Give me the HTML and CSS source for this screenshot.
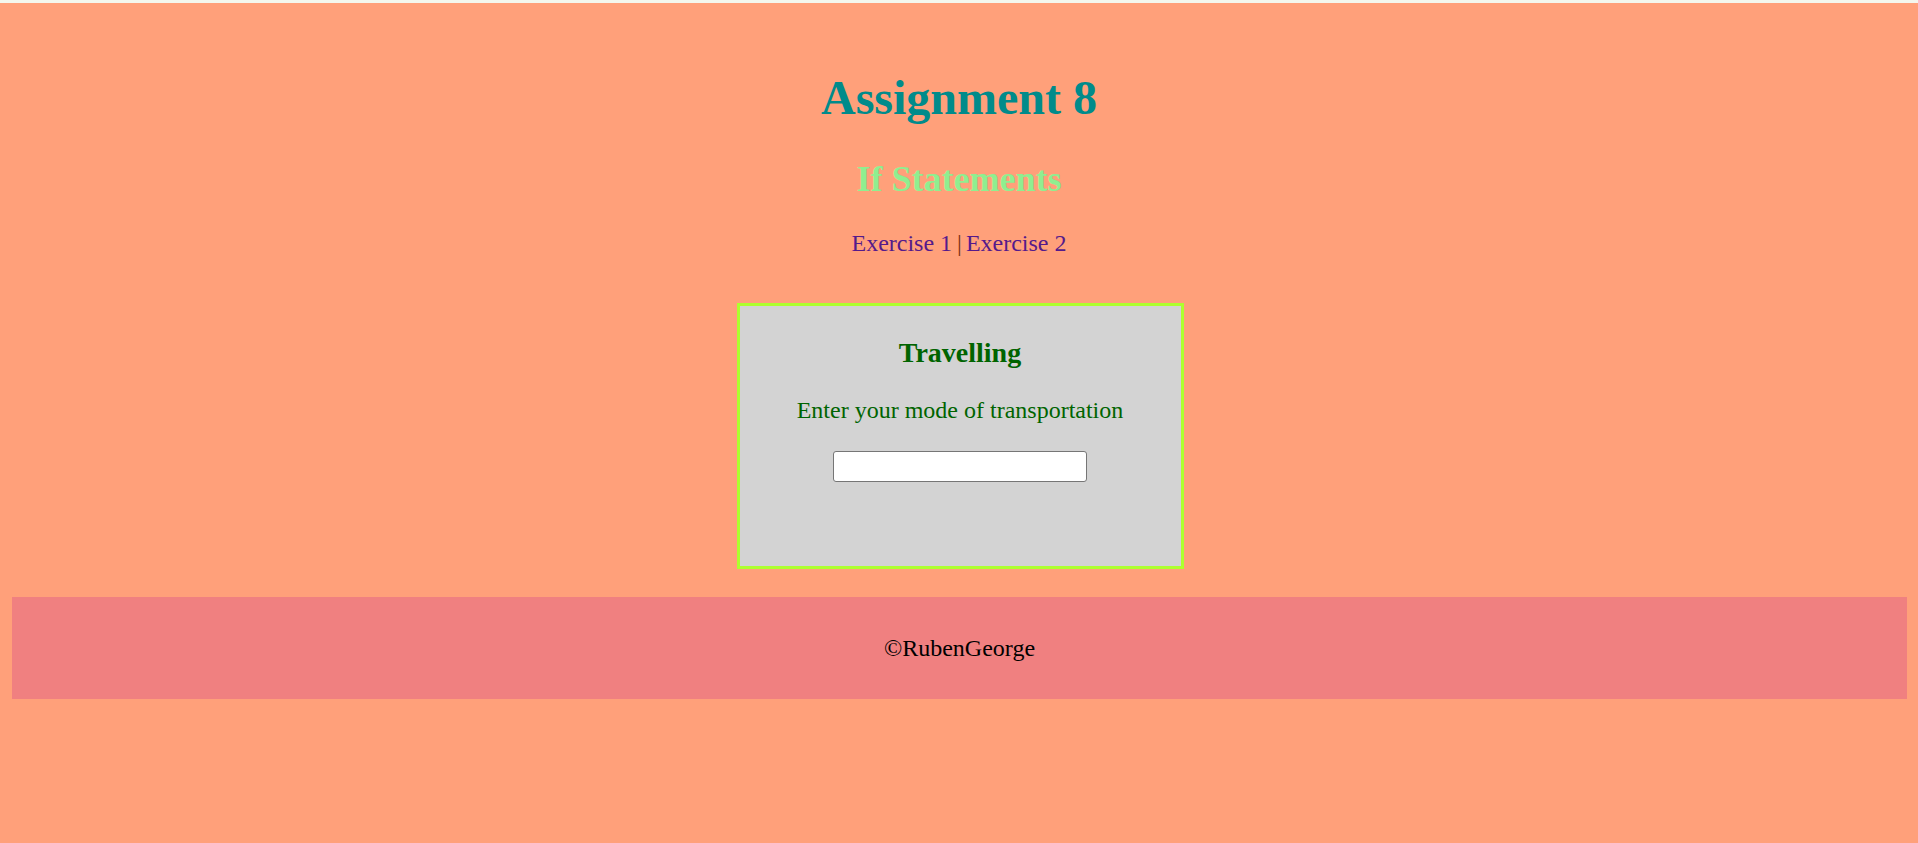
FILE: index.html
```html
<!DOCTYPE html>
<html lang="en">
<head>
<meta charset="utf-8">
<title>Assignment 8</title>
<link rel="stylesheet" href="styles.css">
</head>
<body>
<div class="topbar"></div>
<header class="header">
  <h1 class="title">Assignment 8</h1>
  <h2 class="subtitle">If Statements</h2>
  <nav class="nav"><a class="nav-link" href="#">Exercise 1</a><span class="nav-sep">|</span><a class="nav-link" href="#">Exercise 2</a></nav>
</header>
<main class="main">
  <section class="card">
    <h3 class="card-title">Travelling</h3>
    <p class="card-text">Enter your mode of transportation</p>
    <input class="card-input" type="text">
  </section>
</main>
<footer class="footer">
  <p class="footer-text">&copy;RubenGeorge</p>
</footer>
</body>
</html>
```

FILE: styles.css
```css
html, body {
  margin: 0;
  padding: 0;
}

body {
  background: #ffa07a;
  font-family: "Liberation Serif", "Times New Roman", serif;
  font-size: 24px;
  color: #000;
  min-height: 843px;
}

.topbar {
  height: 3px;
  background: #f4f7ee;
}

.header {
  display: flex;
  flex-direction: column;
  align-items: center;
  padding-top: 67px;
}

.title {
  margin: 0;
  font-size: 48px;
  line-height: 55px;
  font-weight: bold;
  color: #008b8b;
}

.subtitle {
  margin: 34px 0 0;
  font-size: 36px;
  line-height: 41px;
  font-weight: bold;
  color: #90ee90;
}

.nav {
  margin-top: 29px;
  font-size: 24px;
  line-height: 28px;
  color: #000;
}

.nav-link {
  color: #551a8b;
  text-decoration: none;
}

.nav-sep {
  margin: 0 4px 0 5px;
  color: #7a2e12;
}

.main {
  display: flex;
  justify-content: center;
  margin-top: 46px;
  padding-left: 2px;
}

.card {
  box-sizing: border-box;
  width: 447px;
  height: 266px;
  border: 3px solid #adff2f;
  background: #d3d3d3;
  display: flex;
  flex-direction: column;
  align-items: center;
  padding-top: 31px;
  color: #006400;
}

.card-title {
  margin: 0;
  font-size: 28px;
  line-height: 32px;
  font-weight: bold;
}

.card-text {
  margin: 27px 0 0;
  font-size: 24px;
  line-height: 28px;
}

.card-input {
  box-sizing: border-box;
  margin-top: 27px;
  width: 254px;
  height: 31px;
  background: #fff;
  border: 1px solid #767676;
  border-radius: 3px;
  padding: 2px 4px;
  font-family: "Liberation Sans", Arial, sans-serif;
  font-size: 20px;
}

.footer {
  margin: 28px 11px 0 12px;
  background: #f08080;
  padding: 37px 0 37px;
  text-align: center;
}

.footer-text {
  margin: 0;
  font-size: 24px;
  line-height: 28px;
}
```
